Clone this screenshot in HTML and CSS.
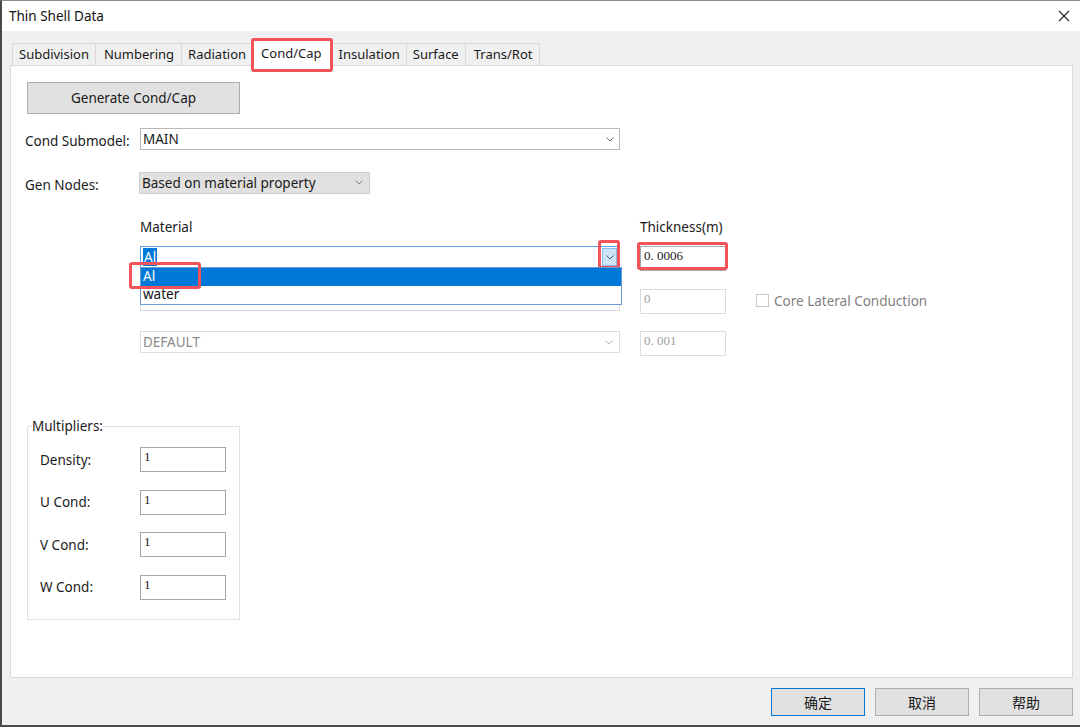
FILE: index.html
```html
<!DOCTYPE html>
<html lang="en">
<head>
    <meta charset="UTF-8">
    <title>Thin Shell Data</title>
    <link rel="stylesheet" href="styles.css">
</head>
<body>
<div class="window">
    <div class="titlebar">
        <span class="title">Thin Shell Data</span>
        <svg class="close" width="12" height="12" viewBox="0 0 12 12">
            <path d="M1 1 L11 11 M11 1 L1 11" stroke="#222" stroke-width="1.1" fill="none"/>
        </svg>
    </div>

    <div class="content">
        <div class="tabs">
            <div class="tab">Subdivision</div>
            <div class="tab tab-wide">Numbering</div>
            <div class="tab">Radiation</div>
            <div class="tab active">Cond/Cap<span class="mark mark-tab"></span></div>
            <div class="tab">Insulation</div>
            <div class="tab">Surface</div>
            <div class="tab tab-wide">Trans/Rot</div>
        </div>

        <div class="panel">
            <button class="btn btn-generate">Generate Cond/Cap</button>

            <div class="field-row submodel-row">
                <label class="field-label">Cond Submodel:</label>
                <div class="combo combo-wide">
                    <span class="combo-text">MAIN</span>
                    <svg class="chev" width="8" height="5" viewBox="0 0 8 5"><path d="M0.5 0.5 L4 4 L7.5 0.5" stroke="#707070" fill="none"/></svg>
                </div>
            </div>

            <div class="field-row nodes-row">
                <label class="field-label">Gen Nodes:</label>
                <div class="combo combo-grey">
                    <span class="combo-text">Based on material property</span>
                    <svg class="chev" width="8" height="5" viewBox="0 0 8 5"><path d="M0.5 0.5 L4 4 L7.5 0.5" stroke="#808080" fill="none"/></svg>
                </div>
            </div>

            <div class="mat-head">
                <span class="head-material">Material</span>
                <span>Thickness(m)</span>
            </div>

            <div class="materials">
                <!-- row 1: open dropdown -->
                <div class="combo combo-wide combo-focus">
                    <span class="combo-text"><span class="sel">Al</span></span>
                    <span class="drop-btn">
                        <svg width="8" height="5" viewBox="0 0 8 5"><path d="M0.5 0.5 L4 4 L7.5 0.5" stroke="#555" fill="none"/></svg>
                        <span class="mark mark-drop"></span>
                    </span>
                    <ul class="drop-list">
                        <li class="drop-item hl">Al<span class="mark mark-item"></span></li>
                        <li class="drop-item">water</li>
                    </ul>
                </div>
                <div class="num-box">0. 0006<span class="mark mark-num"></span></div>
                <div></div>

                <!-- row 2 -->
                <div class="combo combo-wide combo-off">
                    <span class="combo-text">DEFAULT</span>
                    <svg class="chev" width="8" height="5" viewBox="0 0 8 5"><path d="M0.5 0.5 L4 4 L7.5 0.5" stroke="#b5b5b5" fill="none"/></svg>
                </div>
                <div class="num-box num-off">0</div>
                <div class="check-row">
                    <span class="checkbox"></span>
                    <span class="check-label">Core Lateral Conduction</span>
                </div>

                <!-- row 3 -->
                <div class="combo combo-wide combo-off">
                    <span class="combo-text">DEFAULT</span>
                    <svg class="chev" width="8" height="5" viewBox="0 0 8 5"><path d="M0.5 0.5 L4 4 L7.5 0.5" stroke="#b5b5b5" fill="none"/></svg>
                </div>
                <div class="num-box num-off">0. 001</div>
                <div></div>
            </div>

            <fieldset class="group">
                <legend>Multipliers:</legend>
                <div class="mult-row"><label>Density:</label><div class="num-box">1</div></div>
                <div class="mult-row"><label>U Cond:</label><div class="num-box">1</div></div>
                <div class="mult-row"><label>V Cond:</label><div class="num-box">1</div></div>
                <div class="mult-row"><label>W Cond:</label><div class="num-box">1</div></div>
            </fieldset>
        </div>

        <div class="footer">
            <button class="btn btn-foot btn-default">确定</button>
            <button class="btn btn-foot">取消</button>
            <button class="btn btn-foot">帮助</button>
        </div>
    </div>
</div>
</body>
</html>
```

FILE: styles.css
```css
* {
    box-sizing: border-box;
}

body {
    margin: 0;
    font-family: "Noto Sans", "Noto Sans CJK SC", sans-serif;
    font-size: 13.5px;
    color: #1a1a1a;
    background-color: #f0f0f0;
}

.window {
    width: 1080px;
    height: 727px;
    display: flex;
    flex-direction: column;
    background-color: #f0f0f0;
    border-left: 2px solid #4a4a4a;
    border-top: 1px solid #8c8c8c;
    border-bottom: 2px solid #4a4a4a;
}

.titlebar {
    height: 30px;
    flex: none;
    background-color: #fff;
    display: flex;
    align-items: center;
    justify-content: space-between;
    padding: 0 10px 0 7px;
}

.title {
    font-size: 13.5px;
    color: #111;
}

.content {
    flex: 1;
    display: flex;
    flex-direction: column;
    padding: 0 7px 0 8px;
}

/* Tabs */
.tabs {
    display: flex;
    align-items: flex-end;
    height: 25px;
    margin-top: 9px;
    padding-left: 2px;
    position: relative;
    z-index: 1;
    font-size: 13px;
}

.tab {
    height: 22px;
    line-height: 21px;
    padding: 0 6px;
    border: 1px solid #d9d9d9;
    border-bottom: none;
    margin-right: -1px;
    background-color: #f0f0f0;
    white-space: nowrap;
}

.tab-wide {
    padding: 0 7px 0 8px;
}

.tab.active {
    height: 26px;
    margin: 0 -1px -1px -1px;
    padding: 0 10px 0 9px;
    line-height: 25px;
    background-color: #fff;
    position: relative;
    z-index: 2;
}

/* Red annotation boxes */
.mark {
    position: absolute;
    border: 3px solid #f25258;
    border-radius: 3px;
    pointer-events: none;
}

.mark-tab {
    top: -3px;
    left: -1px;
    right: -1px;
    bottom: -6px;
}

.mark-drop {
    top: -9px;
    left: -5px;
    right: -4px;
    bottom: -4px;
}

.mark-num {
    top: -5px;
    left: -4px;
    right: -3px;
    bottom: 0;
}

.mark-item {
    top: -6px;
    left: -12px;
    width: 72px;
    height: 27px;
}

/* Panel */
.panel {
    flex: none;
    height: 613px;
    background-color: #fff;
    border: 1px solid #dadada;
}

.btn {
    font-family: inherit;
    font-size: 13.5px;
    color: #1a1a1a;
    background-color: #e1e1e1;
    border: 1px solid #adadad;
    padding: 0;
}

.btn-generate {
    display: block;
    width: 213px;
    height: 32px;
    margin: 16px 0 0 16px;
}

.field-row {
    display: flex;
    align-items: center;
    margin-left: 14px;
}

.submodel-row {
    margin-top: 14px;
}

.nodes-row {
    margin-top: 21px;
}

.submodel-row .field-label {
    width: 115px;
    padding-top: 3px;
}

.nodes-row .field-label {
    width: 114px;
    padding-top: 5px;
}

.combo {
    height: 22px;
    border: 1px solid #b9b9b9;
    background-color: #fff;
    display: flex;
    align-items: center;
    justify-content: space-between;
    padding: 0 5px 0 2px;
    position: relative;
}

.combo-text {
    line-height: 18px;
}

.combo-wide {
    width: 480px;
}

.combo-grey {
    width: 231px;
    background-color: #e1e1e1;
    border-color: #cfcfcf;
    padding-right: 6px;
}

.combo-focus {
    border-color: #5aa0e2;
    padding-right: 2px;
}

.combo-off {
    border-color: #dcdcdc;
    color: #8a8a8a;
    padding-right: 6px;
}

.sel {
    background-color: #0078d7;
    color: #fff;
    padding: 0 1px;
}

.drop-btn {
    width: 15px;
    height: 18px;
    background-color: #cce4f7;
    border: 1px solid #8cbbe8;
    display: flex;
    align-items: center;
    justify-content: center;
    position: relative;
}

.drop-list {
    position: absolute;
    left: -1px;
    top: 20px;
    width: 482px;
    margin: 0;
    padding: 0;
    list-style: none;
    background-color: #fff;
    border: 1px solid #6b9ad0;
    z-index: 3;
}

.drop-item {
    height: 18px;
    line-height: 17px;
    padding-left: 2px;
    position: relative;
    color: #111;
}

.drop-item.hl {
    background-color: #0078d7;
    color: #fff;
}

/* Material section */
.mat-head {
    display: flex;
    line-height: 18px;
    margin: 24px 0 0 129px;
}

.head-material {
    width: 500px;
}

.materials {
    display: grid;
    grid-template-columns: 480px 86px auto;
    grid-auto-rows: 25px;
    column-gap: 20px;
    row-gap: 17.5px;
    align-items: start;
    margin: 10px 0 0 129px;
}

.num-box {
    width: 86px;
    height: 25px;
    border: 1px solid #a6a6a6;
    background-color: #fff;
    font-family: "Liberation Serif", "Noto Sans CJK SC", serif;
    font-size: 13px;
    line-height: 15px;
    padding: 1px 3px;
    position: relative;
}

.num-off {
    border-color: #dcdcdc;
    color: #a0a0a0;
}

.check-row {
    display: flex;
    align-items: center;
    margin: 3px 0 0 10px;
    color: #7f7f7f;
}

.checkbox {
    width: 13px;
    height: 13px;
    border: 1px solid #c8c8c8;
    margin-right: 5px;
}

/* Multipliers group */
.group {
    width: 213px;
    height: 201px;
    margin: 63px 0 0 16px;
    padding: 0;
    border: 1px solid #e0e0e0;
}

.group legend {
    padding: 0;
    margin-left: 4px;
    line-height: 14px;
}

.mult-row {
    display: flex;
    align-items: center;
    height: 25px;
    margin-top: 17.5px;
    padding-left: 12px;
}

.mult-row:first-of-type {
    margin-top: 14px;
}

.mult-row label {
    width: 100px;
}

/* Footer */
.footer {
    display: flex;
    justify-content: flex-end;
    gap: 10px;
    padding-top: 10px;
}

.btn-foot {
    width: 94px;
    height: 28px;
    font-family: "Noto Sans CJK SC", sans-serif;
    font-size: 14px;
}

.btn-default {
    border-color: #0078d7;
}
```
